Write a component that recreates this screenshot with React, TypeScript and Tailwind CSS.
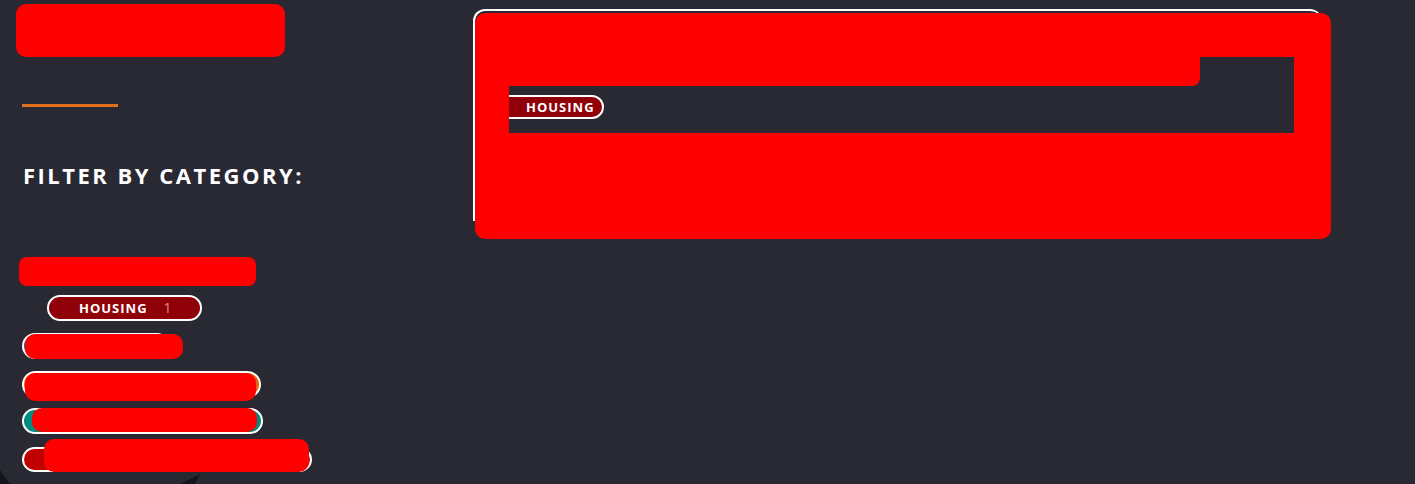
import React from "react";

const RED = "bg-[#ff0000]";

export default function App() {
  return (
    <div className="relative w-[1415px] h-[484px] overflow-hidden bg-[#282933] flex font-['Open_Sans',sans-serif]">
      <aside className="w-[473px] shrink-0 flex flex-col pt-[4px]">
        <div className={`ml-[16px] w-[269px] h-[53px] ${RED} rounded-[10px]`} />
        <div className="ml-[22px] mt-[47px] w-[96px] h-[3px] bg-[#e0701a]" />
        <h2 className="ml-[23px] mt-[54px] text-[22px] leading-[28px] font-bold tracking-[2.5px] text-white whitespace-nowrap">
          FILTER BY CATEGORY:
        </h2>
        <div className={`ml-[19px] mt-[68px] w-[237px] h-[29px] ${RED} rounded-[8px]`} />

        <div className="ml-[47px] mt-[9px] w-fit h-[26px] flex items-center gap-[16px] pl-[30px] pr-[28px] rounded-full border-2 border-white bg-[#900008]">
          <span className="text-[13px] font-bold tracking-[1px] text-white leading-none">HOUSING</span>
          <span className="text-[14px] text-[#d89090] leading-none">1</span>
        </div>

        <div className="relative ml-[22px] mt-[12px] w-[148px] h-[26px] rounded-full border-2 border-white bg-[#1c5d9c]">
          <div className={`absolute left-[1px] top-[-1px] w-[158px] h-[25px] ${RED} rounded-[10px]`} />
        </div>
        <div className="relative ml-[22px] mt-[12px] w-[239px] h-[27px] rounded-full border-2 border-white bg-[#e8650e]">
          <div className={`absolute left-[1px] top-[0px] w-[231px] h-[28px] ${RED} rounded-[10px]`} />
        </div>
        <div className="relative ml-[22px] mt-[10px] w-[241px] h-[26px] rounded-full border-2 border-white bg-[#008a80]">
          <div className={`absolute left-[8px] top-[-2px] w-[225px] h-[24px] ${RED} rounded-[10px]`} />
        </div>
        <div className="relative ml-[22px] mt-[13px] w-[290px] h-[25px] rounded-full border-2 border-white bg-[#c00000]">
          <div className={`absolute left-[20px] top-[-10px] w-[265px] h-[33px] ${RED} rounded-[10px]`} />
        </div>
      </aside>

      <main className="pt-[9px]">
        <div className="w-[849px] h-[212px] border-t-2 border-l-2 border-white rounded-tl-[12px] rounded-tr-[12px]">
          <div className={`mt-[2px] w-[856px] h-[226px] ${RED} rounded-[10px] pt-[44px] pl-[34px]`}>
            <div className="w-[785px] h-[76px] bg-[#282933] overflow-hidden flex flex-col">
              <div className={`w-[691px] h-[29px] ${RED} rounded-br-[8px]`} />
              <div className="-ml-[14px] mt-[9px] w-fit h-[24px] flex items-center pl-[29px] pr-[7px] rounded-full border-2 border-white bg-[#900008]">
                <span className="text-[13px] font-bold tracking-[1px] text-white leading-none">HOUSING</span>
              </div>
            </div>
          </div>
        </div>
      </main>

      <svg className="absolute left-0 top-[468px]" width="210" height="16" viewBox="0 0 210 16">
        <path d="M0 2 Q4 8 10 16 L0 16 Z" fill="#14151b" />
        <path d="M180 16 L200 6 L195 16 Z" fill="#14151b" />
      </svg>
    </div>
  );
}
